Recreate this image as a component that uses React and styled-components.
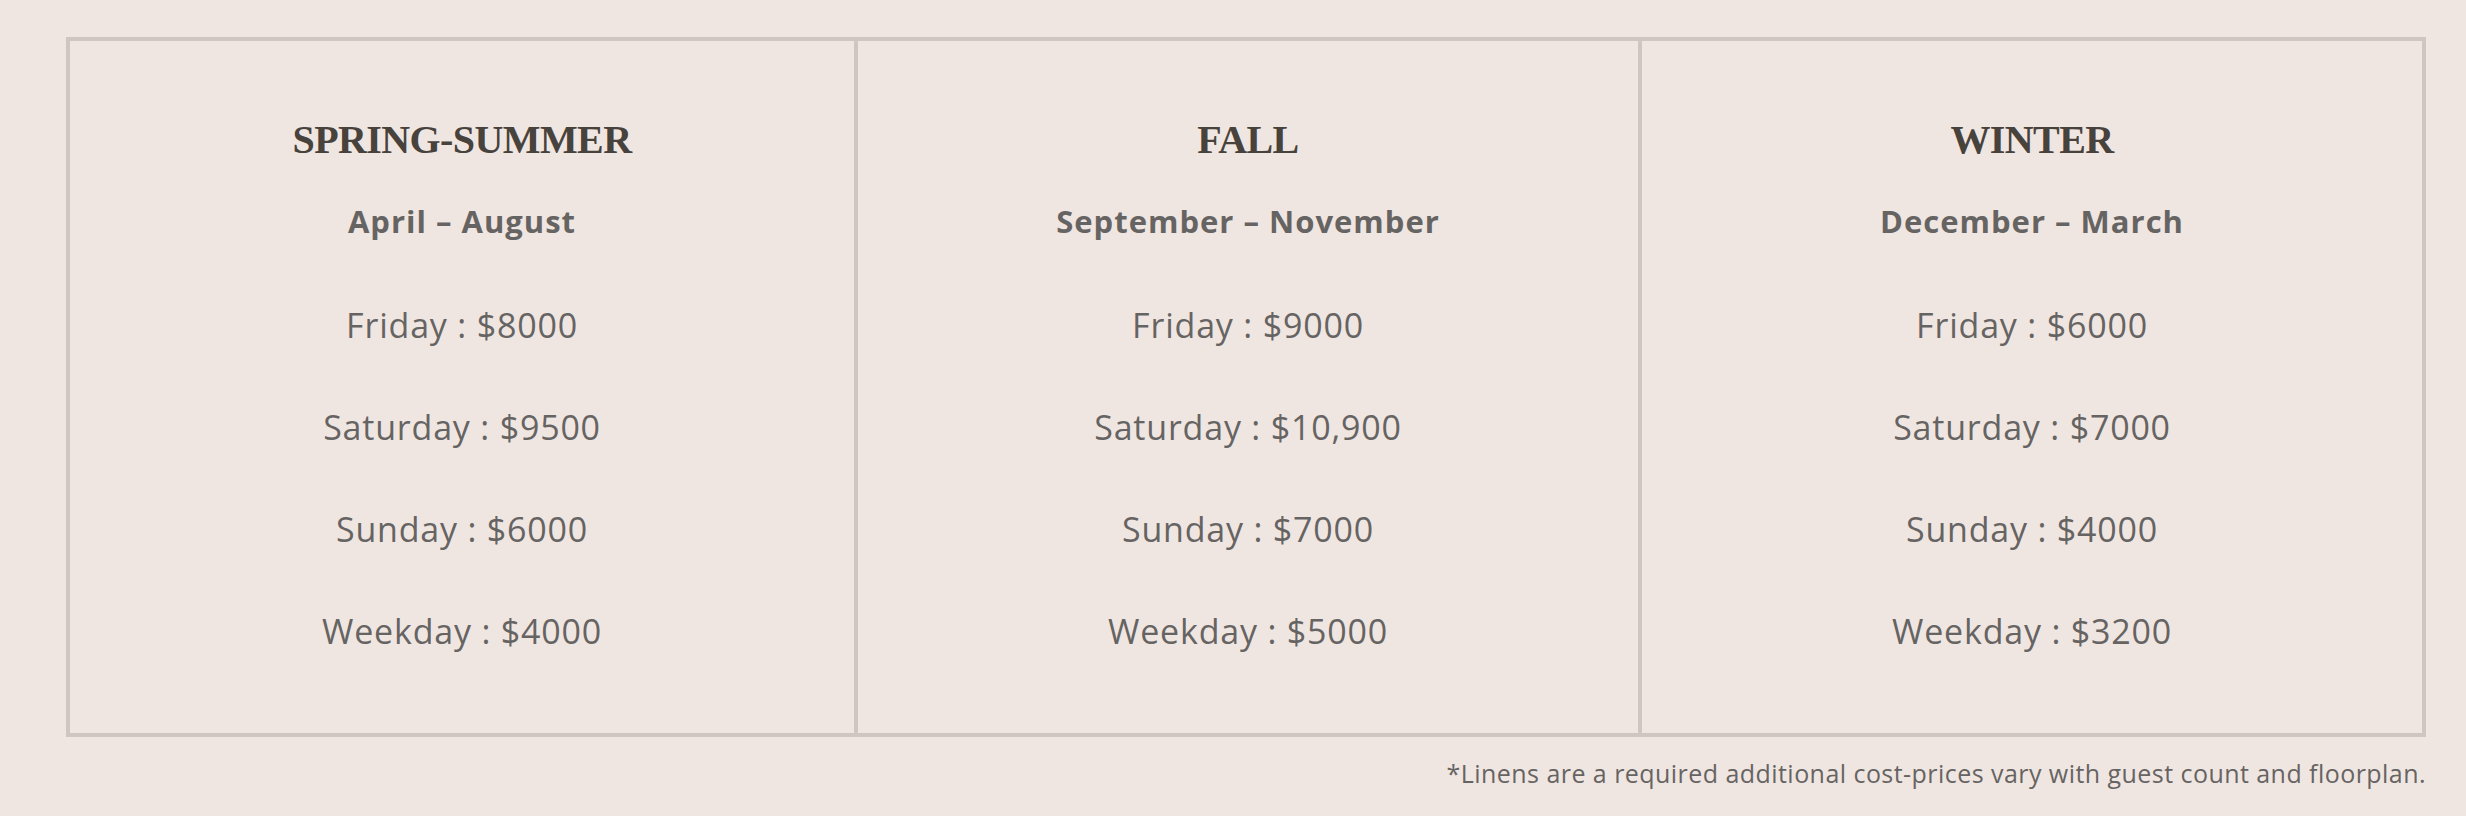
import React from "react";
import styled, { createGlobalStyle } from "styled-components";

const GlobalStyle = createGlobalStyle`
  html, body {
    margin: 0;
    padding: 0;
    background: #f0e6e1;
  }
  * { box-sizing: border-box; }
`;

const Page = styled.div`
  width: 2466px;
  min-height: 816px;
  padding: 37px 40px 0 66px;
  background: #f0e6e1;
`;

const Table = styled.div`
  display: grid;
  grid-template-columns: repeat(3, 1fr);
  border: 4px solid #d0c6c1;
`;

const Column = styled.div`
  display: flex;
  flex-direction: column;
  align-items: center;
  padding: 74px 0 51px;
  border-left: ${(p) => (p.$first ? "none" : "4px solid #d0c6c1")};
`;

const Season = styled.h2`
  margin: 0;
  font-family: "Liberation Serif", "DejaVu Serif", serif;
  font-weight: 700;
  font-size: 40px;
  line-height: 50px;
  color: #48423d;
  letter-spacing: -0.6px;
`;

const Months = styled.div`
  margin-top: 36px;
  font-family: "Open Sans", "Noto Sans", sans-serif;
  font-weight: 700;
  font-size: 31px;
  line-height: 40px;
  color: #666463;
  letter-spacing: 1px;
`;

const PriceList = styled.ul`
  list-style: none;
  margin: 33px 0 0;
  padding: 0;
  display: flex;
  flex-direction: column;
  align-items: center;
`;

const Price = styled.li`
  font-family: "Open Sans", "Noto Sans", sans-serif;
  font-weight: 400;
  font-size: 34px;
  line-height: 102px;
  height: 102px;
  color: #666463;
  letter-spacing: 0.8px;
  white-space: nowrap;
`;

const Footnote = styled.p`
  margin: 21px 0 0;
  text-align: right;
  font-family: "Open Sans", "Noto Sans", sans-serif;
  font-size: 25px;
  line-height: 30px;
  color: #666463;
  letter-spacing: 0.45px;
`;

const seasons = [
  {
    name: "SPRING-SUMMER",
    months: "April – August",
    prices: [
      ["Friday", "$8000"],
      ["Saturday", "$9500"],
      ["Sunday", "$6000"],
      ["Weekday", "$4000"],
    ],
  },
  {
    name: "FALL",
    months: "September – November",
    prices: [
      ["Friday", "$9000"],
      ["Saturday", "$10,900"],
      ["Sunday", "$7000"],
      ["Weekday", "$5000"],
    ],
  },
  {
    name: "WINTER",
    months: "December – March",
    prices: [
      ["Friday", "$6000"],
      ["Saturday", "$7000"],
      ["Sunday", "$4000"],
      ["Weekday", "$3200"],
    ],
  },
];

export default function App() {
  return (
    <>
      <GlobalStyle />
      <Page>
        <Table>
          {seasons.map((s, i) => (
            <Column key={s.name} $first={i === 0}>
              <Season>{s.name}</Season>
              <Months>{s.months}</Months>
              <PriceList>
                {s.prices.map(([day, price]) => (
                  <Price key={day}>
                    {day} : {price}
                  </Price>
                ))}
              </PriceList>
            </Column>
          ))}
        </Table>
        <Footnote>
          *Linens are a required additional cost-prices vary with guest count and floorplan.
        </Footnote>
      </Page>
    </>
  );
}
